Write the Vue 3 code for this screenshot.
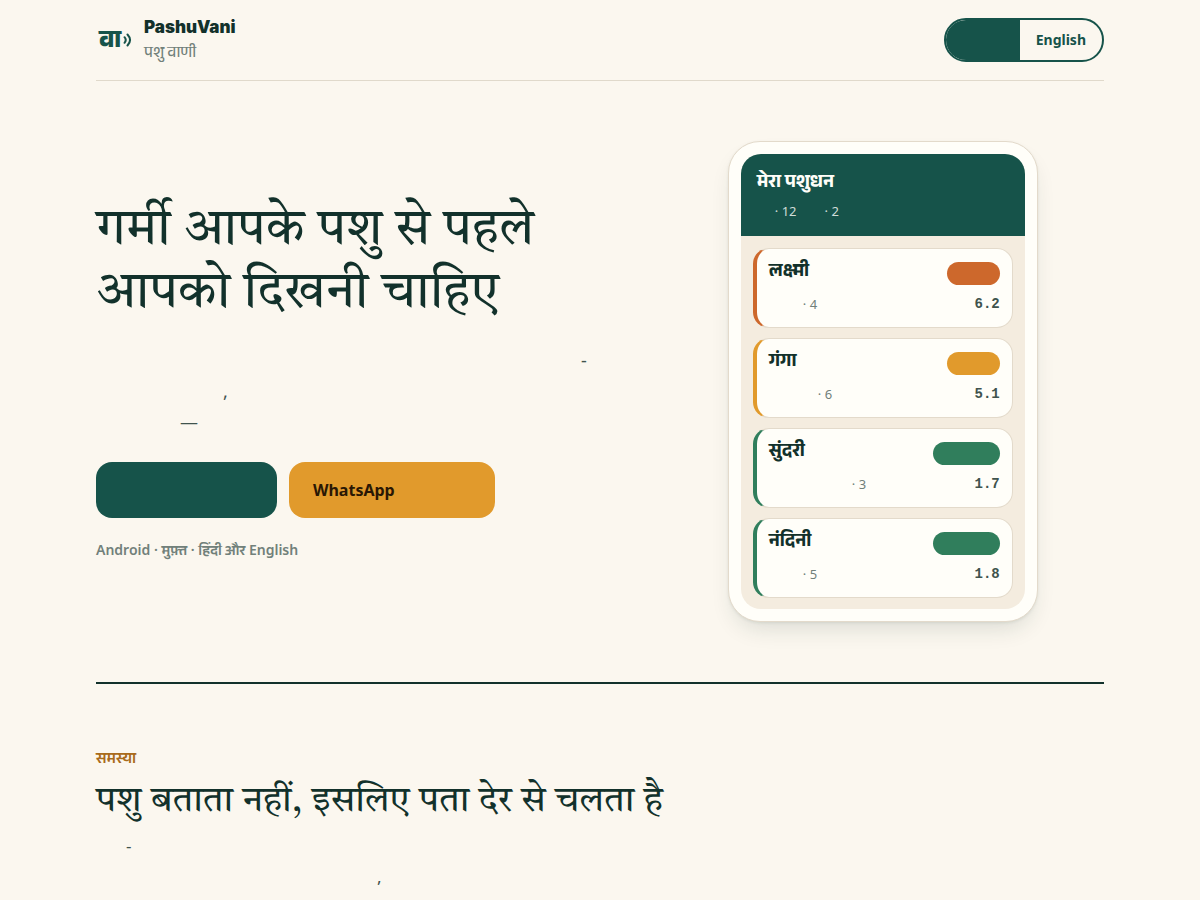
<script setup>
import { ref } from 'vue'

const lang = ref('hi')
const animals = [
  { name: 'लक्ष्मी', lead: 'w34', count: '4', score: '6.2', tone: 'heat', pill: 'short' },
  { name: 'गंगा', lead: 'w49', count: '6', score: '5.1', tone: 'watch', pill: 'short' },
  { name: 'सुंदरी', lead: 'w83', count: '3', score: '1.7', tone: 'calm', pill: 'long' },
  { name: 'नंदिनी', lead: 'w34', count: '5', score: '1.8', tone: 'calm', pill: 'long' }
]
</script>

<template>
  <div class="page">
    <header class="top">
      <a class="brand" href="#">
        <span class="mark" aria-hidden="true">
          <span class="glyph">वा</span>
          <svg width="9" height="16" viewBox="0 0 9 16" fill="none" stroke="#16534a" stroke-width="2" stroke-linecap="round">
            <path d="M1.5 5.2Q4 8 1.5 10.8" />
            <path d="M4.5 2.5Q9.6 8 4.5 13.5" />
          </svg>
        </span>
        <span class="names">
          <span class="title">PashuVani</span>
          <span class="sub">पशु वाणी</span>
        </span>
      </a>
      <div class="switch" role="group" aria-label="Language">
        <button type="button" :class="{ on: lang === 'hi' }" aria-label="Hindi" @click="lang = 'hi'"></button>
        <button type="button" :class="{ on: lang === 'en' }" @click="lang = 'en'">English</button>
      </div>
    </header>

    <main>
      <section class="hero">
        <div class="copy">
          <h1>गर्मी आपके पशु से पहले आपको दिखनी चाहिए</h1>
          <div class="lede">
            <p class="l1">-</p>
            <p class="l2">,</p>
            <p class="l3">—</p>
          </div>
          <div class="actions">
            <a class="btn primary" href="#" aria-label="Android"></a>
            <a class="btn gold" href="#">WhatsApp</a>
          </div>
          <p class="note">Android · <span lang="hi">मुफ़्त</span> · <span lang="hi">हिंदी और</span> English</p>
        </div>

        <div class="phone">
          <div class="screen">
            <div class="bar">
              <h2>मेरा पशुधन</h2>
              <p><span>· 12</span><span>· 2</span></p>
            </div>
            <ul>
              <li v-for="a in animals" :key="a.name" :class="a.tone">
                <div class="row">
                  <h3>{{ a.name }}</h3>
                  <span class="pill" :class="a.pill"></span>
                </div>
                <div class="row low">
                  <span class="count" :class="a.lead">· {{ a.count }}</span>
                  <span class="score">{{ a.score }}</span>
                </div>
              </li>
            </ul>
          </div>
        </div>
      </section>

      <section class="problem">
        <p class="kicker">समस्या</p>
        <h2>पशु बताता नहीं, इसलिए पता देर से चलता है</h2>
        <p class="p1">-</p>
        <p class="p2">,</p>
      </section>
    </main>
  </div>
</template>

<style>
body {
  margin: 0;
  background: #fbf7ef;
}
</style>

<style scoped>
* {
  box-sizing: border-box;
}
.page {
  max-width: 1008px;
  margin: 0 auto;
  color: #12312b;
  font-family: "Noto Sans", "Noto Sans Devanagari", sans-serif;
}
h1, h2, h3, p, ul {
  margin: 0;
  padding: 0;
}
.top {
  display: flex;
  align-items: center;
  justify-content: space-between;
  height: 81px;
  border-bottom: 1px solid #e0d9cb;
}
.brand {
  display: flex;
  align-items: center;
  gap: 12px;
  color: inherit;
  text-decoration: none;
}
.mark {
  display: flex;
  align-items: center;
  width: 36px;
  padding-left: 3px;
  gap: 2px;
}
.glyph {
  padding-top: 8px;
  font: 800 24px/32px "Anek Devanagari", "Noto Sans", sans-serif;
  color: #16534a;
}
.mark svg {
  flex: none;
}
.names {
  display: flex;
  flex-direction: column;
}
.title {
  padding-top: 2px;
  font: 900 17px/24px Inter, sans-serif;
}
.sub {
  padding-top: 4px;
  font: 500 15px/24px "Anek Devanagari", "Noto Sans", sans-serif;
  color: #71807a;
}
.switch {
  display: flex;
  height: 44px;
  border: 2px solid #16534a;
  border-radius: 22px;
  overflow: hidden;
}
.switch button {
  min-width: 74px;
  padding: 0 16px;
  border: 0;
  background: transparent;
  color: #16534a;
  font: 700 14px/20px "Noto Sans", sans-serif;
}
.switch .on {
  background: #16534a;
}
.hero {
  display: grid;
  grid-template-columns: 1.17fr 1fr;
  gap: 48px;
  align-items: center;
  padding: 60px 0;
  border-bottom: 2px solid #12312b;
}
h1 {
  font: 400 51px/63px "Tiro Devanagari Hindi", "Noto Serif Devanagari", serif;
}
.lede {
  margin-top: 20px;
  font-size: 18px;
  line-height: 31px;
  color: #40534d;
}
.l1 { padding-left: 485px; }
.l2 { padding-left: 127px; }
.l3 { padding-left: 84px; }
.actions {
  display: flex;
  gap: 12px;
  margin-top: 24px;
}
.btn {
  height: 56px;
  padding: 0 24px;
  border-radius: 16px;
  font-size: 16px;
  line-height: 56px;
  font-weight: 700;
  text-decoration: none;
}
.primary {
  width: 181px;
  background: #16534a;
}
.gold {
  width: 206px;
  background: #e19a2c;
  color: #2a1704;
}
.note {
  margin-top: 20px;
  font-size: 14px;
  line-height: 24px;
  font-weight: 600;
  color: #71807a;
}
.note span {
  font-family: "Anek Devanagari", "Noto Sans", sans-serif;
}
.phone {
  justify-self: center;
  width: 310px;
  padding: 12px;
  border: 1px solid #e3dacb;
  border-radius: 32px;
  background: #fffef9;
  box-shadow: 0 12px 24px -8px rgba(18, 49, 43, 0.16), 0 1px 3px rgba(18, 49, 43, 0.08);
}
.screen {
  overflow: hidden;
  border-radius: 20px;
  background: #f4ecdf;
}
.bar {
  padding: 12px 16px;
  background: #16534a;
  color: #fffef9;
}
.bar h2 {
  padding-top: 4px;
  font: 700 18px/28px "Anek Devanagari", "Noto Sans", sans-serif;
}
.bar p {
  display: flex;
  gap: 28px;
  padding-left: 18px;
  font-size: 13px;
  line-height: 26px;
  color: #d0ddd9;
}
ul {
  display: grid;
  gap: 10px;
  padding: 12px 12px 11px;
  list-style: none;
}
li {
  padding: 8px 12px;
  border: 1px solid #e3dacb;
  border-left: 4px solid;
  border-radius: 16px;
  background: #fffef9;
}
.row {
  display: flex;
  justify-content: space-between;
  align-items: center;
}
li.heat { border-left-color: #cd682c; }
li.watch { border-left-color: #e19a2c; }
li.calm { border-left-color: #307e5c; }
h3 {
  font: 700 18px/32px "Anek Devanagari", "Noto Sans", sans-serif;
}
.pill {
  height: 23px;
  border-radius: 12px;
}
.short { width: 53px; }
.long { width: 67px; }
.heat .pill { background: #cd682c; }
.watch .pill { background: #e19a2c; }
.calm .pill { background: #307e5c; }
.low {
  margin-top: 3px;
  padding-bottom: 3px;
}
.count {
  font-size: 13px;
  line-height: 24px;
  color: #71807a;
}
.w34 { padding-left: 34px; }
.w49 { padding-left: 49px; }
.w83 { padding-left: 83px; }
.score {
  font: 700 14px/24px "Liberation Mono", monospace;
  color: #40534d;
}
.problem {
  padding-top: 64px;
}
.kicker {
  font: 600 15px/26px "Anek Devanagari", "Noto Sans", sans-serif;
  color: #a96b1b;
}
.problem h2 {
  margin-top: 4px;
  font: 400 36px/48px "Tiro Devanagari Hindi", "Noto Serif Devanagari", serif;
}
.p1, .p2 {
  font-size: 17px;
  line-height: 31px;
  color: #40534d;
}
.p1 {
  margin-top: 4px;
  padding-left: 30px;
}
.p2 { padding-left: 281px; }
</style>
